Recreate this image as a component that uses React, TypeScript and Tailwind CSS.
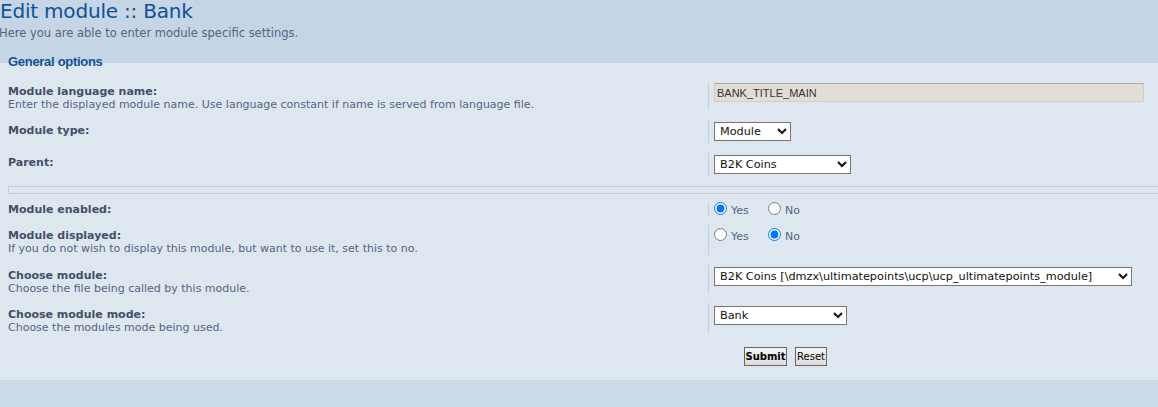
import React from "react";

type RowProps = {
  mt: string;
  h: string;
  dtPt: string;
  ddPt: string;
  label: string;
  desc?: string;
  children: React.ReactNode;
};

function Row({ mt, h, dtPt, ddPt, label, desc, children }: RowProps) {
  return (
    <div className={`flex items-stretch ${mt} ${h}`}>
      <div className={`w-[700px] shrink-0 ${dtPt}`}>
        <div className="text-[11px] leading-[13px] font-bold text-[#425067] whitespace-nowrap">{label}</div>
        {desc && <div className="text-[11px] leading-[13px] text-[#536482] whitespace-nowrap">{desc}</div>}
      </div>
      <div className={`border-l border-[#c7d0d9] pl-[5px] grow ${ddPt}`}>{children}</div>
    </div>
  );
}

function Sel({ w, value, options }: { w: string; value: string; options: string[] }) {
  return (
    <select
      defaultValue={value}
      className={`${w} h-[19px] block border border-[#767676] bg-white text-[11.25px] font-normal text-[#111] pl-[1px] font-['DejaVu_Sans',sans-serif]`}
    >
      {options.map((o) => (
        <option key={o} value={o}>
          {o}
        </option>
      ))}
    </select>
  );
}

function Radios({ name, yes }: { name: string; yes: boolean }) {
  return (
    <div className="flex items-start text-[11px] leading-[13px] text-[#536482]">
      <label className="flex items-start w-[54px]">
        <input type="radio" name={name} defaultChecked={yes} className="m-0 w-[13px] h-[13px]" />
        <span className="ml-[4px] mt-[2px]">Yes</span>
      </label>
      <label className="flex items-start">
        <input type="radio" name={name} defaultChecked={!yes} className="m-0 w-[13px] h-[13px]" />
        <span className="ml-[4px] mt-[2px]">No</span>
      </label>
    </div>
  );
}

export default function App() {
  return (
    <div className="w-[1158px] h-[407px] overflow-hidden bg-[#cbdae8] font-['DejaVu_Sans',sans-serif]">
      <div className="h-[62px] bg-[#c5d5e5] flow-root">
        <h1 className="text-[20px] leading-[22px] tracking-[-0.2px] text-[#115098] font-normal">
          Edit module :: Bank
        </h1>
        <p className="text-[11.5px] leading-[14px] text-[#536482] mt-[4px] -ml-[1px]">
          Here you are able to enter module specific settings.
        </p>
      </div>
      <div className="h-[319px] bg-[#dee7f0] border-t border-b border-[#cfd4da] px-[8px]">
        <div className="-mt-[9px] font-['Liberation_Sans',Arial,sans-serif] text-[13px] leading-[15px] tracking-[-0.3px] font-bold text-[#115098]">
          General options
        </div>

        <Row
          mt="mt-[13px]"
          h="h-[27px]"
          dtPt="pt-[3px]"
          ddPt="pt-[1px]"
          label="Module language name:"
          desc="Enter the displayed module name. Use language constant if name is served from language file."
        >
          <input
            type="text"
            defaultValue="BANK_TITLE_MAIN"
            className="block w-[430px] h-[19px] bg-[#e2ddd6] border border-[#d3cec6] border-t-[#a9a9a9] pl-[2px] text-[11px] text-[#333] font-['Liberation_Sans',Arial,sans-serif]"
          />
        </Row>

        <Row mt="mt-[11px]" h="h-[23px]" dtPt="pt-[4px]" ddPt="pt-[2px]" label="Module type:">
          <Sel w="w-[77px]" value="Module" options={["Category", "Module"]} />
        </Row>

        <Row mt="mt-[10px]" h="h-[23px]" dtPt="pt-[3px]" ddPt="pt-[2px]" label="Parent:">
          <Sel w="w-[137px]" value="B2K Coins" options={["No parent", "B2K Coins"]} />
        </Row>

        <div className="mt-[10px] h-[8px] border-t border-b border-l border-[#c9cdd2] -mr-[8px]" />

        <Row mt="mt-[8px]" h="h-[14px]" dtPt="pt-[1px]" ddPt="pt-0" label="Module enabled:">
          <Radios name="enabled" yes={true} />
        </Row>

        <Row
          mt="mt-[9px]"
          h="h-[30px]"
          dtPt="pt-[4px]"
          ddPt="pt-[3px]"
          label="Module displayed:"
          desc="If you do not wish to display this module, but want to use it, set this to no."
        >
          <Radios name="displayed" yes={false} />
        </Row>

        <Row
          mt="mt-[10px]"
          h="h-[29px]"
          dtPt="pt-[4px]"
          ddPt="pt-[2px]"
          label="Choose module:"
          desc="Choose the file being called by this module."
        >
          <Sel
            w="w-[418px]"
            value="B2K Coins [\dmzx\ultimatepoints\ucp\ucp_ultimatepoints_module]"
            options={["B2K Coins [\\dmzx\\ultimatepoints\\ucp\\ucp_ultimatepoints_module]"]}
          />
        </Row>

        <Row
          mt="mt-[9px]"
          h="h-[30px]"
          dtPt="pt-[5px]"
          ddPt="pt-[3px]"
          label="Choose module mode:"
          desc="Choose the modules mode being used."
        >
          <Sel w="w-[133px]" value="Bank" options={["Bank"]} />
        </Row>

        <div className="mt-[14px] flex gap-[8px] pl-[736px]">
          <button className="w-[43px] h-[19px] border border-[#666] bg-gradient-to-b from-[#f4f4f4] to-[#dcdcdc] text-[10px] leading-[17px] font-bold text-black">
            Submit
          </button>
          <button className="w-[32px] h-[19px] border border-[#666] bg-gradient-to-b from-[#f4f4f4] to-[#dcdcdc] text-[10px] leading-[17px] text-black">
            Reset
          </button>
        </div>
      </div>
    </div>
  );
}
